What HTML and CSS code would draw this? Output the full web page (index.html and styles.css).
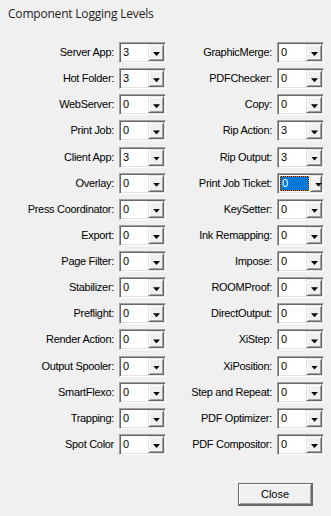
FILE: index.html
```html
<!DOCTYPE html>
<html lang="en">
<head>
    <meta charset="UTF-8">
    <meta name="viewport" content="width=device-width, initial-scale=1.0">
    <title>Component Logging Levels</title>
    <link rel="stylesheet" href="styles.css">
</head>
<body>
    <div class="dialog">
        <h1 class="title">Component Logging Levels</h1>

        <!-- two columns of label + level combo -->
        <div class="levels">
            <span class="name">Server App:</span>
            <div class="combo"><span class="value">3</span><span class="drop"></span></div>
            <span class="name">GraphicMerge:</span>
            <div class="combo"><span class="value">0</span><span class="drop"></span></div>

            <span class="name">Hot Folder:</span>
            <div class="combo"><span class="value">3</span><span class="drop"></span></div>
            <span class="name">PDFChecker:</span>
            <div class="combo"><span class="value">0</span><span class="drop"></span></div>

            <span class="name">WebServer:</span>
            <div class="combo"><span class="value">0</span><span class="drop"></span></div>
            <span class="name">Copy:</span>
            <div class="combo"><span class="value">0</span><span class="drop"></span></div>

            <span class="name">Print Job:</span>
            <div class="combo"><span class="value">0</span><span class="drop"></span></div>
            <span class="name">Rip Action:</span>
            <div class="combo"><span class="value">3</span><span class="drop"></span></div>

            <span class="name">Client App:</span>
            <div class="combo"><span class="value">3</span><span class="drop"></span></div>
            <span class="name">Rip Output:</span>
            <div class="combo"><span class="value">3</span><span class="drop"></span></div>

            <span class="name">Overlay:</span>
            <div class="combo"><span class="value">0</span><span class="drop"></span></div>
            <span class="name">Print Job Ticket:</span>
            <div class="combo focused"><span class="value">0</span><span class="drop"></span></div>

            <span class="name">Press Coordinator:</span>
            <div class="combo"><span class="value">0</span><span class="drop"></span></div>
            <span class="name">KeySetter:</span>
            <div class="combo"><span class="value">0</span><span class="drop"></span></div>

            <span class="name">Export:</span>
            <div class="combo"><span class="value">0</span><span class="drop"></span></div>
            <span class="name">Ink Remapping:</span>
            <div class="combo"><span class="value">0</span><span class="drop"></span></div>

            <span class="name">Page Filter:</span>
            <div class="combo"><span class="value">0</span><span class="drop"></span></div>
            <span class="name">Impose:</span>
            <div class="combo"><span class="value">0</span><span class="drop"></span></div>

            <span class="name">Stabilizer:</span>
            <div class="combo"><span class="value">0</span><span class="drop"></span></div>
            <span class="name">ROOMProof:</span>
            <div class="combo"><span class="value">0</span><span class="drop"></span></div>

            <span class="name">Preflight:</span>
            <div class="combo"><span class="value">0</span><span class="drop"></span></div>
            <span class="name">DirectOutput:</span>
            <div class="combo"><span class="value">0</span><span class="drop"></span></div>

            <span class="name">Render Action:</span>
            <div class="combo"><span class="value">0</span><span class="drop"></span></div>
            <span class="name">XiStep:</span>
            <div class="combo"><span class="value">0</span><span class="drop"></span></div>

            <span class="name">Output Spooler:</span>
            <div class="combo"><span class="value">0</span><span class="drop"></span></div>
            <span class="name">XiPosition:</span>
            <div class="combo"><span class="value">0</span><span class="drop"></span></div>

            <span class="name">SmartFlexo:</span>
            <div class="combo"><span class="value">0</span><span class="drop"></span></div>
            <span class="name">Step and Repeat:</span>
            <div class="combo"><span class="value">0</span><span class="drop"></span></div>

            <span class="name">Trapping:</span>
            <div class="combo"><span class="value">0</span><span class="drop"></span></div>
            <span class="name">PDF Optimizer:</span>
            <div class="combo"><span class="value">0</span><span class="drop"></span></div>

            <span class="name">Spot Color</span>
            <div class="combo"><span class="value">0</span><span class="drop"></span></div>
            <span class="name">PDF Compositor:</span>
            <div class="combo"><span class="value">0</span><span class="drop"></span></div>
        </div>

        <div class="actions">
            <button type="button" class="close-btn">Close</button>
        </div>
    </div>
</body>
</html>
```

FILE: styles.css
```css
body {
    margin: 0;
    padding: 0;
    background-color: #f0f0f0;
    font-family: "Liberation Sans", Arial, sans-serif;
    font-size: 11px;
    color: #000000;
}

.dialog {
    width: 331px;
    height: 516px;
}

.title {
    margin: 0;
    padding: 6px 8px 0;
    font-family: "Open Sans", "Noto Sans", sans-serif;
    font-size: 12px;
    font-weight: normal;
    line-height: 16px;
    letter-spacing: -0.2px;
    color: #1e1e1e;
}

.levels {
    display: grid;
    grid-template-columns: 109px 47px 101px 47px;
    grid-auto-rows: 21px;
    column-gap: 5px;
    row-gap: 5.13px;
    margin-top: 20px;
    padding-left: 5px;
}

.name {
    text-align: right;
    line-height: 21px;
    letter-spacing: -0.3px;
    white-space: nowrap;
}

/* sunken combo box */
.combo {
    display: flex;
    box-sizing: border-box;
    height: 21px;
    border-top: 1px solid #a0a0a0;
    border-left: 1px solid #a0a0a0;
    border-right: 1px solid #ffffff;
    border-bottom: 1px solid #ffffff;
    box-shadow: inset 1px 1px 0 #696969, inset -1px -1px 0 #e3e3e3;
    background-color: #ffffff;
    padding: 1px;
}

.combo .value {
    flex: 1;
    padding-left: 2px;
    line-height: 17px;
}

.combo .drop {
    position: relative;
    box-sizing: border-box;
    width: 16px;
    background-color: #f0f0f0;
    border-top: 1px solid #e3e3e3;
    border-left: 1px solid #e3e3e3;
    border-right: 1px solid #696969;
    border-bottom: 1px solid #696969;
    box-shadow: inset 1px 1px 0 #ffffff, inset -1px -1px 0 #a0a0a0;
}

.combo .drop::after {
    content: "";
    position: absolute;
    left: 4px;
    top: 7px;
    width: 7px;
    height: 4px;
    background-color: #000000;
    clip-path: polygon(0 0, 100% 0, 50% 100%);
}

.combo.focused .value {
    flex: none;
    width: 26px;
    margin: 1px;
    padding-left: 1px;
    line-height: 13px;
    color: #ffffff;
    border: 1px dotted #f08c28;
    background: linear-gradient(#0078d7, #0078d7) padding-box, #111111;
}

.actions {
    display: flex;
    justify-content: flex-end;
    margin-top: 28px;
    padding-right: 18px;
}

.close-btn {
    box-sizing: border-box;
    width: 75px;
    height: 23px;
    padding: 0;
    font-family: "Liberation Sans", Arial, sans-serif;
    font-size: 11px;
    color: #000000;
    background-color: #f0f0f0;
    border-top: 1px solid #696969;
    border-left: 1px solid #696969;
    border-right: 2px solid #696969;
    border-bottom: 2px solid #696969;
    box-shadow: inset 1px 1px 0 #ffffff, inset -1px -1px 0 #a0a0a0;
}
```
